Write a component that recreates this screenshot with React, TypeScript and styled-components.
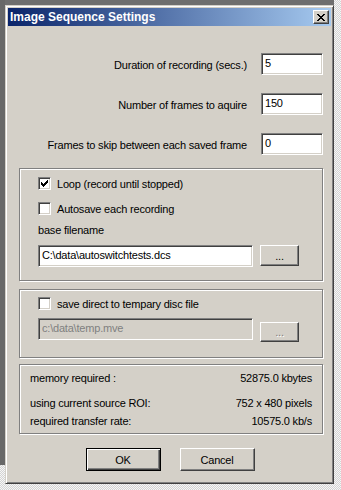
import React from 'react';
import styled, { createGlobalStyle, css } from 'styled-components';

const Global = createGlobalStyle`
  html, body { margin: 0; padding: 0; }
  body {
    width: 341px; height: 490px; overflow: hidden;
    font-family: "Liberation Sans", Arial, sans-serif;
  }
`;

const FS = '11px';
const LS = '-0.2px';

const Desktop = styled.div`
  width: 341px; height: 490px; box-sizing: border-box;
  padding: 5px 0 0 5px;
  background:
    linear-gradient(#686868, #686868) 0 0 / 5px 465px no-repeat,
    linear-gradient(#6e6e6e, #6e6e6e) 0 0 / 334px 5px no-repeat,
    repeating-conic-gradient(#d4d4d4 0 25%, #f6f6f6 0 50%) 0 0 / 2px 2px;
`;

const Window = styled.div`
  width: 329px; height: 479px; box-sizing: border-box;
  background: #d4d0c8;
  border: 1px solid; border-color: #d4d0c8 #404040 #404040 #d4d0c8;
  box-shadow: inset 1px 1px 0 #fff, inset -1px -1px 0 #808080;
  padding: 2px;
  display: flex; flex-direction: column;
`;

const TitleBar = styled.div`
  height: 18px; flex: none;
  display: flex; align-items: center; justify-content: space-between;
  padding: 0 2px 0 2px;
  background: linear-gradient(to right, #0a246a, #a6caf0);
`;

const TitleText = styled.span`
  font-weight: bold; font-size: 12px; color: #fff;
`;

const CloseBtn = styled.div`
  width: 16px; height: 14px; box-sizing: border-box;
  background: #d4d0c8;
  border: 1px solid; border-color: #fff #404040 #404040 #fff;
  box-shadow: inset -1px -1px 0 #808080;
  display: flex; align-items: center; justify-content: center;
`;

const Body = styled.div`
  flex: 1;
  display: flex; flex-direction: column;
  padding: 27px 8px 0 11px;
  font-size: ${FS}; letter-spacing: ${LS}; color: #000;
`;

const FieldRow = styled.div<{ $mt: number }>`
  display: flex; justify-content: flex-end; align-items: center;
  gap: 14px; height: 22px;
  margin-top: ${p => p.$mt}px;
`;

const Label = styled.span`
  white-space: nowrap;
  position: relative; top: 1px;
`;

const Input = styled.div<{ $w: number; $disabled?: boolean }>`
  width: ${p => p.$w}px; height: 22px; box-sizing: border-box;
  border: 1px solid; border-color: #808080 #fff #fff #808080;
  box-shadow: inset 1px 1px 0 #404040, inset -1px -1px 0 #d4d0c8;
  background: ${p => (p.$disabled ? '#d4d0c8' : '#fff')};
  color: ${p => (p.$disabled ? '#808080' : '#000')};
  line-height: 18px;
  padding: 0 3px;
  white-space: nowrap; overflow: hidden;
`;

const Group = styled.div<{ $mt: number; $pad: string }>`
  margin-top: ${p => p.$mt}px;
  border: 1px solid #808080;
  box-shadow: 1px 1px 0 #fff, inset 1px 1px 0 #fff;
  padding: ${p => p.$pad};
  display: flex; flex-direction: column;
`;

const CheckRow = styled.div<{ $mt?: number }>`
  display: flex; align-items: center; gap: 6px;
  margin-top: ${p => p.$mt ?? 0}px;
  height: 13px;
`;

const Box = styled.div`
  width: 13px; height: 13px; box-sizing: border-box; flex: none;
  border: 1px solid; border-color: #808080 #fff #fff #808080;
  box-shadow: inset 1px 1px 0 #404040, inset -1px -1px 0 #d4d0c8;
  background: #fff;
  display: flex; align-items: center; justify-content: center;
`;

const PlainText = styled.div<{ $mt: number }>`
  margin-top: ${p => p.$mt}px;
  line-height: 13px;
`;

const FileRow = styled.div<{ $mt: number }>`
  display: flex; align-items: flex-start; gap: 7px;
  margin-top: ${p => p.$mt}px;
`;

const Button = styled.div<{ $w: number; $h: number; $default?: boolean; $disabled?: boolean; $mt?: number }>`
  width: ${p => p.$w}px; height: ${p => p.$h}px; box-sizing: border-box;
  margin-top: ${p => p.$mt ?? 0}px;
  background: #d4d0c8;
  display: flex; align-items: center; justify-content: center;
  font-size: ${FS};
  color: ${p => (p.$disabled ? '#808080' : '#000')};
  text-shadow: ${p => (p.$disabled ? '1px 1px 0 #fff' : 'none')};
  ${p =>
    p.$default
      ? css`
          border: 1px solid #000;
          box-shadow: inset 1px 1px 0 #fff, inset -1px -1px 0 #404040, inset -2px -2px 0 #808080;
        `
      : css`
          border: 1px solid; border-color: #fff #404040 #404040 #fff;
          box-shadow: inset -1px -1px 0 #808080;
        `}
`;

const InfoRow = styled.div<{ $mt: number }>`
  display: flex; justify-content: space-between;
  margin-top: ${p => p.$mt}px;
  line-height: 13px;
`;

const ButtonBar = styled.div`
  display: flex; justify-content: center; gap: 19px;
  margin-top: 14px;
  padding-right: 2px;
`;

const Check = () => (
  <svg width="7" height="7" viewBox="0 0 7 7" shapeRendering="crispEdges">
    <path
      d="M6 0h1v3h-1zM5 1h1v3h-1zM4 2h1v3h-1zM0 2h1v3H0zM1 3h1v3H1zM2 4h1v3H2zM3 3h1v3H3z"
      fill="#000"
    />
  </svg>
);

const XIcon = () => (
  <svg width="8" height="7" viewBox="0 0 8 7" shapeRendering="crispEdges">
    <path
      d="M0 0h2v1H0zM6 0h2v1H6zM1 1h2v1H1zM5 1h2v1H5zM2 2h4v1H2zM3 3h2v1H3zM2 4h4v1H2zM1 5h2v1H1zM5 5h2v1H5zM0 6h2v1H0zM6 6h2v1H6z"
      fill="#000"
    />
  </svg>
);

export default function App() {
  return (
    <>
      <Global />
      <Desktop>
        <Window>
          <TitleBar>
            <TitleText>Image Sequence Settings</TitleText>
            <CloseBtn>
              <XIcon />
            </CloseBtn>
          </TitleBar>
          <Body>
            <FieldRow $mt={0}>
              <Label>Duration of recording (secs.)</Label>
              <Input $w={62}>5</Input>
            </FieldRow>
            <FieldRow $mt={18}>
              <Label>Number of frames to aquire</Label>
              <Input $w={62}>150</Input>
            </FieldRow>
            <FieldRow $mt={18}>
              <Label>Frames to skip between each saved frame</Label>
              <Input $w={62}>0</Input>
            </FieldRow>

            <Group $mt={13} $pad="8px 18px 13px 18px">
              <CheckRow>
                <Box>
                  <Check />
                </Box>
                Loop (record until stopped)
              </CheckRow>
              <CheckRow $mt={12}>
                <Box />
                Autosave each recording
              </CheckRow>
              <PlainText $mt={9}>base filename</PlainText>
              <FileRow $mt={8}>
                <Input $w={215}>C:\data\autoswitchtests.dcs</Input>
                <Button $w={39} $h={21}>...</Button>
              </FileRow>
            </Group>

            <Group $mt={8} $pad="7px 18px 15px 18px">
              <CheckRow>
                <Box />
                save direct to tempary disc file
              </CheckRow>
              <FileRow $mt={8}>
                <Input $w={215} $disabled>c:\data\temp.mve</Input>
                <Button $w={39} $h={20} $mt={4} $disabled>...</Button>
              </FileRow>
            </Group>

            <Group $mt={6} $pad="7px 10px 5px 10px">
              <InfoRow $mt={0}>
                <span>memory required :</span>
                <span>52875.0 kbytes</span>
              </InfoRow>
              <InfoRow $mt={12}>
                <span>using current source ROI:</span>
                <span>752 x 480 pixels</span>
              </InfoRow>
              <InfoRow $mt={5}>
                <span>required transfer rate:</span>
                <span>10575.0 kb/s</span>
              </InfoRow>
            </Group>

            <ButtonBar>
              <Button $w={75} $h={23} $default>OK</Button>
              <Button $w={75} $h={23}>Cancel</Button>
            </ButtonBar>
          </Body>
        </Window>
      </Desktop>
    </>
  );
}
